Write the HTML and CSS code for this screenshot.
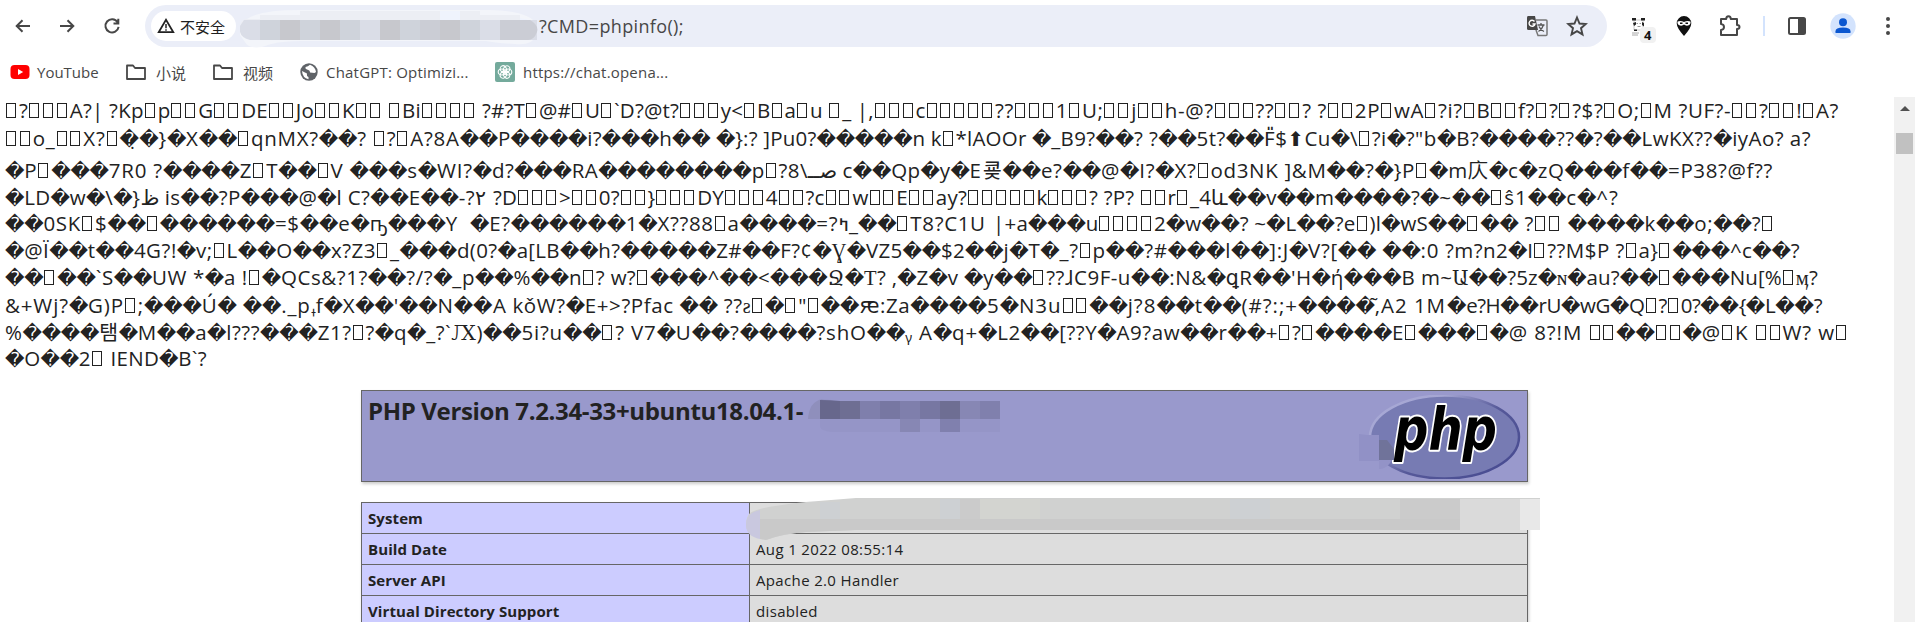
FILE: index.html
```html
<!DOCTYPE html>
<html lang="zh-CN">
<head>
<meta charset="utf-8">
<title>phpinfo()</title>
<link rel="stylesheet" href="styles.css">
</head>
<body>
<header class="toolbar">
  <nav class="nav">
    <svg width="20" height="20" viewBox="0 0 20 20"><path d="M18 10H4M10.500 4.200 4.700 10l5.800 5.800"/></svg>
    <svg width="20" height="20" viewBox="0 0 20 20"><path d="M3 10h13M10.500 4.200l5.800 5.800-5.800 5.800"/></svg>
    <svg width="20" height="20" viewBox="0 0 20 20"><path d="M15.600 6.200A6.600 6.600 0 1 0 16.600 10.800M16.300 2.800v4.700h-4.800"/></svg>
  </nav>
  <div class="omnibox">
    <span class="chip">
      <svg width="18" height="16" viewBox="0 0 18 16"><path d="M9 1.800 1.700 14.200h14.600z" fill="none" stroke="#222" stroke-width="1.700"/><path d="M9 6v4.200M9 11.300v1.500" stroke="#222" stroke-width="1.500"/></svg>
      不安全
    </span>
    <span class="mosaic url-mask"><svg width="298" height="42" viewBox="0 0 298 42">
      <path d="M7 10Q20 1 60 1H250Q290 2 297 16V26Q292 37 275 35Q255 34 246 32L60 32Q35 32 22 38Q8 40 5 33L0 26Q0 14 7 10Z" fill="#f3f5fa"/>
      <path d="M5 10H20V6H60V2H240V6H280V10Q297 12 297 18H0Q0 12 5 10Z" fill="#eceef4"/>
      <path d="M200 2h20v9h-20zM280 9q13 2 16 7h-16z" fill="#eff3fd"/>
      <path d="M4 11H297V31H10Q-2 28 0 17Z" fill="#dadde7"/>
      <path d="M20 11h20v20H20zM60 11h20v20H60zM100 11h20v20h-20zM160 11h20v20h-20zM220 11h20v20h-20z" fill="#cfd3db"/>
      <path d="M40 11h20v20H40zM80 11h20v20H80zM140 11h20v20h-20zM200 11h20v20h-20z" fill="#c7c8cd"/>
      <path d="M180 11h20v20h-20zM260 11h30q9 5 7 12-3 8-9 8h-28z" fill="#cbcdd5"/>
    </svg></span>
    <span class="url">?CMD=phpinfo();</span>
    <span class="box-actions">
      <svg width="22" height="22" viewBox="0 0 22 22"><path d="M2 1h7l3 14H2.500Q1 15 1 13.500V2.500Q1 1 2 1Z" fill="#474747"/><path d="M9.500 5H20q1 0 1 1v13.500q0 1-1 1h-8L10 15" fill="none" stroke="#777" stroke-width="1.500"/><path d="M8.500 6.500A3 3 0 1 0 9 9H6.500" fill="none" stroke="#fff" stroke-width="1.400"/><path d="M11.500 10h7M15 8v2M17.500 10q-1.500 4.500-5 6.500M13 11.500q1.500 3.500 5 5" fill="none" stroke="#555" stroke-width="1.300"/></svg>
      <svg width="22" height="22" viewBox="0 0 22 22"><path d="m11 2.500 2.500 6 6.300.5-4.800 4.200 1.500 6.200L11 16.100l-5.500 3.300L7 13.200 2.200 9l6.300-.5z" fill="none" stroke="#474747" stroke-width="1.900"/></svg>
    </span>
  </div>
  <div class="extensions">
    <svg class="panda" width="28" height="28" viewBox="0 0 28 28"><path d="M5 4h9v10H5z" fill="#fff" stroke="#ccc"/><path d="M3 2h4v2.500H3zM12 2h4v2.500h-4zM4 7l3-1v2.500l-2 1.500zM13 6l2 1v3.500l-2-1.500zM5 13.500h3V15H5z" fill="#222"/><path d="M7.500 7.500h1.500M10.500 7.500H12M8.500 10.500h3" stroke="#999"/><path d="M3 17h7M3 19h6" stroke="#aaa"/><rect x="11" y="11" width="16" height="16" rx="4" fill="#f1f1f1"/><text x="15" y="24" class="badge">4</text></svg>
    <svg class="ninja" width="16" height="22" viewBox="0 0 16 22"><path d="M8 1a7.300 7.300 0 0 1 7.300 7.300Q15.300 13 8 21 .7 13 .7 8.300A7.300 7.300 0 0 1 8 1Z" fill="#111"/><path d="M1.500 6.500Q5 5.500 8 7q3-1.500 6.500-.5.500 3-2.500 4-2.500.5-4-1-1.500 1.500-4 1-3-1-2.500-4Z" fill="#fff"/><path d="M4 8.200h2.500M9.500 8.200H12" stroke="#111" stroke-width="1.500"/></svg>
    <svg class="puzzle" width="24" height="24" viewBox="0 0 24 24"><path d="M3 5h5.200q0-2.800 2.300-2.800T12.800 5H19v6q2.500 0 2.500 2T19 15v6H3v-5q3-.3 3-3t-3-3Z" fill="none" stroke="#474747" stroke-width="2" stroke-linejoin="round"/></svg>
    <span class="divider"></span>
    <svg class="panel" width="20" height="20" viewBox="0 0 20 20"><rect x="2" y="2" width="16" height="16" rx="1.500" fill="none" stroke="#474747" stroke-width="2"/><path d="M11 2h7v16h-7z" fill="#474747"/></svg>
    <svg class="avatar" width="26" height="26" viewBox="0 0 26 26"><circle cx="13" cy="13" r="12.700" fill="#d3e3fd"/><circle cx="13" cy="9.300" r="4" fill="#0b57d0"/><path d="M5.500 20v-1.800q0-3.700 7.500-3.700t7.500 3.700V20Z" fill="#0b57d0"/></svg>
    <svg class="more" width="6" height="20" viewBox="0 0 6 20"><g fill="#474747"><circle cx="3" cy="3" r="2"/><circle cx="3" cy="10" r="2"/><circle cx="3" cy="17" r="2"/></g></svg>
  </div>
</header>
<nav class="bookmarks">
  <a class="bm yt"><svg width="20" height="20" viewBox="0 0 20 20"><rect x=".5" y="3" width="19" height="14" rx="4" fill="#f00"/><path d="m8 7 5.200 3L8 13z" fill="#fff"/></svg>YouTube</a>
  <a class="bm fold1"><svg width="22" height="18" viewBox="0 0 22 18"><path d="M2 2.500h6l2 2.500h10v11H2Z" fill="none" stroke="#474747" stroke-width="1.800" stroke-linejoin="round"/></svg>小说</a>
  <a class="bm fold2"><svg width="22" height="18" viewBox="0 0 22 18"><path d="M2 2.500h6l2 2.500h10v11H2Z" fill="none" stroke="#474747" stroke-width="1.800" stroke-linejoin="round"/></svg>视频</a>
  <a class="bm gpt"><svg width="18" height="18" viewBox="0 0 18 18"><circle cx="9" cy="9" r="8.700" fill="#5f6368"/><path d="M10 1.800q-2 2-4.500 2.200-.5 2 1.500 2.500 3 .5 3 3l4.500.5 1.500-1q-.5-5-6-7.200ZM2 8l5 2.500q-.5 3 1.500 3.500v2.200Q2.500 15 2 8Z" fill="#fff"/></svg>ChatGPT: Optimizi...</a>
  <a class="bm openai"><svg width="20" height="20" viewBox="0 0 20 20"><rect width="20" height="20" rx="2" fill="#74aa9c"/><g fill="none" stroke="#fff" stroke-width="1.100"><ellipse id="p" cx="10" cy="6.800" rx="3" ry="3.600" transform="rotate(30 10 10)"/><use href="#p" transform="rotate(60 10 10)"/><use href="#p" transform="rotate(120 10 10)"/><use href="#p" transform="rotate(180 10 10)"/><use href="#p" transform="rotate(240 10 10)"/><use href="#p" transform="rotate(300 10 10)"/></g></svg>https://chat.opena...</a>
</nav>
<div class="viewport">
<main class="page">
  <div class="dump">
    <p><span data-w="477">▯?▯▯▯A?| ?Kp▯p▯▯G▯▯DE▯▯Jo▯▯K▯▯ ▯Bi▯▯▯▯ </span><span data-w="513">?#?T▯@#▯U▯`D?@t?▯▯▯y&lt;▯B▯a▯u ▯_ |,▯▯▯c▯▯▯▯▯</span><span data-w="443">??▯▯▯1▯U;▯▯j▯▯h-@?▯▯▯??▯▯? ?▯▯2P▯wA▯</span><span data-w="401">?i?▯B▯▯f?▯?▯?$?▯O;▯M ?UF?-▯▯?▯▯!▯A?</span></p>
    <p><span data-w="493">▯▯o_▯▯X?▯�̣�}�X��▯qnMX?��? ▯?▯A?8A��</span><span data-w="534">P����i?���h�� �}:? ]Pu0?�����n k▯*lAOOr </span><span data-w="405">�_B9?��? ?��5t?��F̎$<b class="up">⬆</b>Cu�\▯?i�?"b</span><span data-w="374">�B?����??�?��LwKX??�iyAo? a?</span></p>
    <p><span data-w="487">�P▯���7R0 ?����Z▯T��▯V ���s�WI?�</span><span data-w="491">d?���RA��������p▯?8\<bdi>صــ</bdi> c��Qp�y�E</span><span data-w="446">쿚��e?��@�I?�X?▯od3NK ]&amp;M��?�}P▯</span><span data-w="344">�m庂�c�zQ���f��=P38?@f??</span></p>
    <p><span data-w="488">�LD�w�\�}<bdi>ظ</bdi> is��?P���@�l C?��E��-?<bdi>۲</bdi> </span><span data-w="474">?D▯▯▯&gt;▯▯0?▯▯}▯▯▯DY▯▯▯4▯▯?c▯▯w▯▯E▯▯ay?</span><span data-w="453">▯▯▯▯▯k▯▯▯? ?P? ▯▯r▯_4և��v��m����?</span><span data-w="199">�~��▯ŝ1��c�^?</span></p>
    <p><span data-w="465">��0SK▯$��▯������=$��e�ҧ���Y  </span><span data-w="523">�E?������1�X??88▯a����=?<bdi>ߤ</bdi>_��▯T8?C1U </span><span data-w="435">|+a���u▯▯▯▯2�w��? ~�L��?e▯)l�wS</span><span data-w="347">��▯�� ?▯▯ ����k��o;��?▯</span></p>
    <p><span data-w="452">�@Ï��t��4G?!�v;▯L��O��x?Z3▯_���</span><span data-w="508">d(0?�a[LB��h?�����Z#��F?¢�<b>Ɣ</b>�VZ5��$2</span><span data-w="480">��j�T�_?▯p��?#���l��]:J�V?[�� ��:0 </span><span data-w="355">?m?n2�I▯??M$P ?▯a}▯���^c��?</span></p>
    <p><span data-w="470">��▯��`S��UW *�a !▯�QCs&amp;?1?��?/?�_p</span><span data-w="489">��%��n▯? w?▯���^��&lt;���<b>Ջ</b>�<b>T</b>? ,�Z�v </span><span data-w="457">�y��▯??ɺC9F-u��:N&amp;�<b>ꝗ</b>R��'H�ή���B </span><span data-w="397">m~<b>Ա</b>��?5z�<b>ɴ</b>�au?��▯���Nu[%▯<b>ӎ</b>?</span></p>
    <p><span data-w="488">&amp;+Wj?�G)P▯;���Ú� ��._p<bdi class="small">ߪ</bdi>f�X��'��N��</span><span data-w="494">A kǒW?�E+&gt;?Pfac �� ??<b>ƨ</b>▯�▯"▯��<b>ԙ</b>:Za����</span><span data-w="460">5�N3u▯▯��j?8��t��(#?:;+����,̃A2 1M</span><span data-w="375">�e?H��rU�wG�Q▯?▯0?��{�L��?</span></p>
    <p><span data-w="478">%����탬�M��a�l???���Z1?▯?�q�_?`<b>Ԕ</b>)</span><span data-w="495">��5i?u��▯? V7�U��?����?shO��ᵧ A�q+</span><span data-w="440">�L2��[??Y�A9?aw��r��+▯?▯����E▯</span><span data-w="431">���▯�@ 8?!M ▯▯��▯▯�@▯K ▯▯W? w▯</span></p>
    <p><span data-w="202">�O��2▯ IEND�B`?</span></p>
  </div>
  <section class="version">
    <h1>PHP Version 7.2.34-33+ubuntu18.04.1-</h1>
    <svg class="version-mask" width="192" height="36" viewBox="0 0 192 36"><path d="M0 21Q1 4 14 1L20 3V21Z" fill="#8f8fbc"/><path d="M12 28V2Q20 0 26 3H192V34H30Q12 34 12 28Z" fill="#9595c7"/><path d="M12 2q10 0 20 1v18H12z" fill="#67678c"/><path d="M32 3h20v18H32zM132 3h20v18h-20z" fill="#6e6e93"/><path d="M52 3h20v18H52zM92 3h20v18H92z" fill="#7f7fac"/><path d="M72 3h20v18H72zM112 3h20v18h-20z" fill="#7777a2"/><path d="M152 3h20v18h-20zM92 21h20v13H92z" fill="#8787b4"/><path d="M172 3h20v18h-20z" fill="#8080ad"/><path d="M132 21h20v13h-20z" fill="#8080ae"/></svg>
    <svg class="logo" width="164" height="84" viewBox="0 0 164 84">
      <defs><linearGradient id="rim" x1="0" y1="0" x2="1" y2=".8"><stop offset="0" stop-color="#a9aad6"/><stop offset=".3" stop-color="#a5a6d3"/><stop offset=".6" stop-color="#565999"/><stop offset="1" stop-color="#484b91"/></linearGradient></defs>
      <ellipse cx="85.500" cy="42" rx="74.500" ry="41.500" fill="#777bb3" stroke="url(#rim)" stroke-width="2.500"/>
      <g class="php"><text transform="translate(35 55)" textLength="103" lengthAdjust="spacingAndGlyphs">php</text></g>
      <path d="M0 39l8 1h12v26H0z" fill="#9191c6"/><path d="M20 45h8l7 9v11H20z" fill="#70739a"/><path d="M20 65h13q-5 9-13 9z" fill="#9393c7"/>
    </svg>
  </section>
  <div class="table-wrap">
    <table class="info">
      <tr><th>System</th><td></td></tr>
      <tr><th>Build Date</th><td>Aug 1 2022 08:55:14</td></tr>
      <tr><th>Server API</th><td>Apache 2.0 Handler</td></tr>
      <tr><th>Virtual Directory Support</th><td>disabled</td></tr>
    </table>
    <svg class="system-mask" width="796" height="44" viewBox="0 0 796 44"><path d="M4 15Q12 9 60 4L110 0H794V32H110L60 34Q35 36 20 42Q0 38 0 27Q0 19 4 15Z" fill="#d0d1d0"/><path d="M0 27Q0 15 14 12V41Q0 38 0 27Z" fill="#c9c8df"/><path d="M14 21H714V32H110L60 34Q35 36 20 42L14 41Z" fill="#c9c9c9"/><path d="M234 1h60v20h-60z" fill="#d3d4d0"/><path d="M74 4h20v17H74zM194 1h20v20h-20zM484 1h40v20h-40z" fill="#cdd0d3"/><path d="M214 1h20v20h-20zM654 1h60v20h-60z" fill="#cbcbcb"/><path d="M714 1h60v31h-60z" fill="#dadada"/><path d="M774 1h20v31h-20z" fill="#e8e8e8"/></svg>
  </div>
</main>
<aside class="scrollbar"><span class="arrow"></span><span class="thumb"></span></aside>
</div>
<script src="app.js"></script>
</body>
</html>
```

FILE: styles.css
```css
* { box-sizing: border-box; }
body {
  margin: 0;
  height: 622px;
  overflow: hidden;
  background: #fff;
  color: #222;
  font-family: "Open Sans", "Noto Sans", "DejaVu Sans", "Noto Sans CJK SC", sans-serif;
}
svg { display: block; flex: none; }

.toolbar { display: flex; height: 47px; padding-top: 5px; }
.nav { display: flex; gap: 25px; padding: 11px 0 0 12px; width: 145px; }
.nav path { fill: none; stroke: #474747; stroke-width: 2; }
.omnibox {
  display: flex;
  align-items: center;
  width: 1462px;
  height: 42px;
  padding-left: 6px;
  border-radius: 21px;
  background: #ebeef8;
}
.chip {
  display: flex;
  align-items: center;
  gap: 5px;
  width: 85px;
  height: 30px;
  padding-left: 6px;
  border-radius: 15px;
  background: #fff;
  color: #1f1f1f;
  font: 15px "Noto Sans CJK SC", sans-serif;
  white-space: nowrap;
}
.mosaic { display: block; }
.url-mask { width: 298px; height: 42px; margin-left: 4px; padding-top: 4px; }
.url { margin-left: 1px; color: #474747; font-size: 18px; letter-spacing: 0.35px; }
.box-actions { display: flex; gap: 18px; margin-left: auto; padding-right: 19px; }

.extensions { display: flex; align-items: center; height: 42px; }
.panda { margin-left: 22px; margin-top: 7px; }
.badge { font: bold 13px "Open Sans", sans-serif; fill: #111; }
.ninja { margin-left: 19px; }
.puzzle { margin-left: 26px; }
.divider { width: 2px; height: 20px; margin-left: 21px; background: #d3e3fd; }
.panel { margin-left: 22px; }
.avatar { margin-left: 23px; }
.more { margin-left: 29px; }

.bookmarks { display: flex; height: 50px; }
.bm {
  display: flex;
  align-items: center;
  color: #474747;
  font: 15px "Open Sans", "Noto Sans CJK SC", sans-serif;
  letter-spacing: 0.2px;
  white-space: nowrap;
}
.yt { width: 115px; padding-left: 10px; gap: 7px; letter-spacing: 0; }
.fold1, .fold2 { width: 87px; padding-left: 10px; gap: 9px; letter-spacing: 0; }
.gpt { width: 194px; padding-left: 11px; gap: 8px; }
.openai { padding-left: 12px; gap: 8px; }

.viewport { display: flex; height: 525px; }
.page { width: 1894px; overflow: hidden; }
.dump {
  display: grid;
  grid-template-rows: 28px 32px 27px 26px 27px 27px 28px 27px 26px 45px;
  padding: 0 5px;
  font-size: 20.5px;
  line-height: 27px;
}
.dump p { display: flex; height: 27px; margin: 0; white-space: pre; }
.dump span { display: block; flex: none; }
.dump b { font-family: "Liberation Serif", "DejaVu Serif", "DejaVu Sans", serif; font-weight: normal; }
.dump .up { font: 20px/20px "DejaVu Sans", sans-serif; }
.small { font-size: 13px; }
.tofu {
  display: inline-block;
  width: 10px;
  height: 15px;
  margin: 0 2.900px 0 1px;
  border: 1px solid #222;
}
.rep {
  display: inline-block;
  width: 19.200px;
  font: 19px/20px "DejaVu Sans", sans-serif;
  letter-spacing: 0;
  text-align: center;
}

.version {
  position: relative;
  width: 1167px;
  height: 92px;
  margin: 0 0 20px 361px;
  border: 1px solid #666;
  background: #99c;
  box-shadow: 1px 2px 3px #ccc;
}
.version h1 {
  margin: 0;
  padding: 4px 6px;
  font-size: 24px;
  line-height: 32px;
  letter-spacing: -0.350px;
  white-space: nowrap;
}
.version-mask { position: absolute; left: 446px; top: 7px; }
.logo { position: absolute; right: 4px; top: 4px; }
.php {
  font: italic bold 59px "DejaVu Sans", sans-serif;
  fill: #000;
  stroke: #fff;
  stroke-width: 4px;
  stroke-linejoin: round;
  paint-order: stroke;
}
.table-wrap { position: relative; width: 1167px; margin-left: 361px; }
.info {
  width: 1167px;
  border-collapse: collapse;
  table-layout: fixed;
  box-shadow: 1px 2px 3px #ccc;
  font-size: 15px;
}
.info th, .info td { height: 31px; padding: 0 6px; border: 1px solid #666; text-align: left; line-height: 22px; }
.info th { width: 388px; background: #ccf; letter-spacing: 0.1px; }
.info td { background: #ddd; letter-spacing: 0.35px; }
.system-mask { position: absolute; left: 385px; top: -4px; }

.scrollbar { width: 21px; padding: 9px 0 0 2px; background: #f1f1f1; }
.arrow { display: block; width: 0; height: 0; margin-left: 4px; border: 5px solid transparent; border-top: 0; border-bottom-color: #505050; }
.thumb { display: block; width: 17px; height: 21px; margin-top: 22px; background: #c1c1c1; }
```

FILE: app.js
```js
// Wraps undisplayable characters and fits each run to its own width.
for (const run of document.querySelectorAll('.dump span')) {
  run.innerHTML = run.innerHTML
    .replace(/▯/g, '<i class="tofu"></i>')
    .replace(/�/g, '<i class="rep" style="font-style:normal">�</i>');
  const natural = run.getBoundingClientRect().width;
  const count = run.textContent.replace(/�/g, '').length;
  const spacing = (Number(run.dataset.w) - natural) / count;
  run.style.letterSpacing = spacing + 'px';
  for (const rep of run.querySelectorAll('.rep')) rep.style.letterSpacing = '0';
  run.style.width = run.dataset.w + 'px';
}
```
